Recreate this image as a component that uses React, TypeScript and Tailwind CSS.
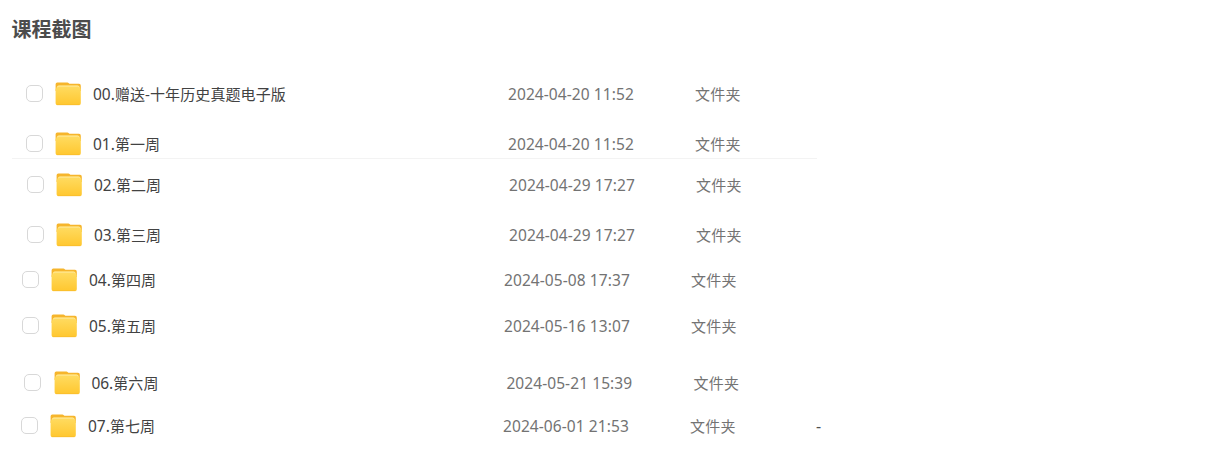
type Row = { no: string; name: string; date: string; place: string; divider?: boolean; size?: string };

const rows: Row[] = [
  { no: '00.', name: '赠送-十年历史真题电子版', date: '2024-04-20 11:52', place: 'pl-[26px]' },
  { no: '01.', name: '第一周', date: '2024-04-20 11:52', place: 'mt-[26px] pl-[26px]', divider: true },
  { no: '02.', name: '第二周', date: '2024-04-29 17:27', place: 'mt-[14px] pl-[27px]' },
  { no: '03.', name: '第三周', date: '2024-04-29 17:27', place: 'mt-[26px] pl-[27px]' },
  { no: '04.', name: '第四周', date: '2024-05-08 17:37', place: 'mt-[21px] pl-[22px]' },
  { no: '05.', name: '第五周', date: '2024-05-16 13:07', place: 'mt-[22px] pl-[22px]' },
  { no: '06.', name: '第六周', date: '2024-05-21 15:39', place: 'mt-[33px] pl-[24.4px]' },
  { no: '07.', name: '第七周', date: '2024-06-01 21:53', place: 'mt-[19px] pl-[21px]', size: '-' },
];

function FolderIcon() {
  return (
    <svg className="ml-[12.4px] block h-6 w-[26px] shrink-0" viewBox="0 0 26 24">
      <defs>
        <linearGradient id="folder-front" x1="0" y1="0" x2="0" y2="1">
          <stop offset="0" stopColor="#ffdc62" />
          <stop offset="1" stopColor="#ffc72f" />
        </linearGradient>
      </defs>
      <path d="M0.6 2.3Q0.6 0.5 2.3 0.5H12.4Q13.2 0.5 13.8 1.2L14.4 1.8H24Q25.8 1.8 25.8 3.8V9H0.6Z" fill="#f6b52c" />
      <path d="M0.6 7Q1.5 6.6 1.7 5.3Q2 3.5 3.8 3.5H22.7Q24.5 3.5 24.7 5.3Q24.9 6.6 25.8 7V21.2Q25.8 23.1 23.9 23.1H2.5Q0.6 23.1 0.6 21.2Z" fill="url(#folder-front)" />
      <path d="M2.3 5.4Q2.5 4.1 3.9 4.1H22.5Q23.9 4.1 24.2 5.4" fill="none" stroke="#ffe99c" strokeWidth="1" />
      <path d="M1.8 22.7H24.6" stroke="#f9bd2c" strokeWidth="0.8" />
    </svg>
  );
}

export default function App() {
  return (
    <main className="h-[467px] w-full overflow-hidden bg-white font-['Noto_Sans','Noto_Sans_CJK_SC',sans-serif] text-[15px]">
      <h1 className="flex h-[82px] items-start pl-[11.5px] pt-[15px] text-[20px] leading-[30px] font-bold text-[#4c4c4c]">课程截图</h1>
      {rows.map((row) => (
        <div key={row.no}>
          <div className={`flex h-6 items-center leading-6 ${row.place}`}>
            <span className="mb-px size-[17px] shrink-0 rounded-[5px] border-[1.5px] border-[#d8d8d8] bg-white" />
            <FolderIcon />
            <span className="ml-[11.6px] flex w-[415px] shrink-0 items-baseline whitespace-nowrap text-[#424242]">
              <span className="text-[15.5px]">{row.no}</span>
              <span className="tracking-[0.1px]">{row.name}</span>
            </span>
            <span className="w-[187px] shrink-0 whitespace-nowrap text-[15.5px] tracking-[0.08px] text-[#737373]">{row.date}</span>
            <span className="w-[126px] shrink-0 whitespace-nowrap tracking-[0.3px] text-[#737373]">文件夹</span>
            {row.size && <span className="mb-px shrink-0 text-[16px] text-[#505050]">{row.size}</span>}
          </div>
          {row.divider && <div className="ml-3 mt-[2px] h-px w-[805px] bg-[#f3f3f3]" />}
        </div>
      ))}
    </main>
  );
}
